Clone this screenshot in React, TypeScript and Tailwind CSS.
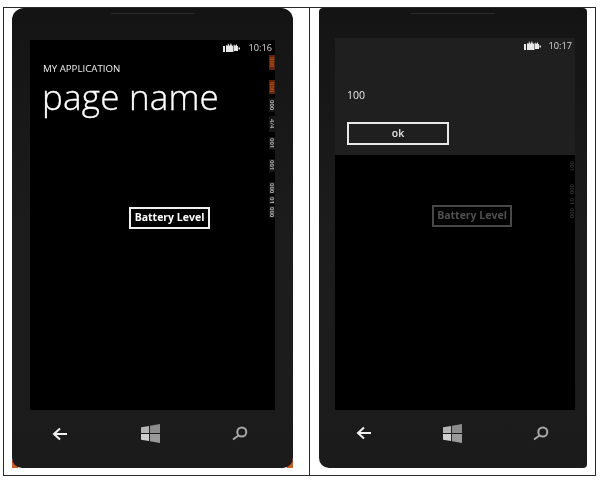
import React from "react";

const font = { fontFamily: '"Open Sans", "Noto Sans", sans-serif' };

function Status({ time, gap }: { time: string; gap: string }) {
  return (
    <div className={`flex items-center justify-end h-[15px] pr-[3px] ${gap}`}>
      <svg width="17" height="9" viewBox="0 0 17 9" className="text-[#e8e8e8]">
        <path fill="currentColor" d="M0 3h2v6H0zM3 2l1.500 1L5 0l1.500 3L8 0l1 3 1.500-1v7H3zM11 1l1 2 2-2v2h1v5h-4z" />
        <rect x="15.500" y="4.500" width="1.500" height="2" fill="currentColor" />
      </svg>
      <span className="text-[9.200px] leading-none text-[#dcdcdc]">{time}</span>
    </div>
  );
}

type Item = { gap: number; h: number; t: string; hot?: boolean };

const live: Item[] = [
  { gap: 0, h: 15, t: "000", hot: true },
  { gap: 10, h: 14, t: "000", hot: true },
  { gap: 4, h: 14, t: "000" },
  { gap: 4, h: 16, t: "4/4" },
  { gap: 5, h: 13, t: "001" },
  { gap: 9, h: 13, t: "001" },
  { gap: 10, h: 12, t: "000" },
  { gap: 2, h: 8, t: "01" },
  { gap: 2, h: 12, t: "000" },
];

const dimmed: Item[] = [
  { gap: 0, h: 12, t: "001" },
  { gap: 11, h: 12, t: "000" },
  { gap: 2, h: 8, t: "01" },
  { gap: 2, h: 12, t: "000" },
];

function Counters({ dim }: { dim?: boolean }) {
  const items = dim ? dimmed : live;
  return (
    <div className={`absolute right-0 w-[6px] flex flex-col ${dim ? "top-[122px]" : "top-[15px]"}`}>
      {items.map((it, i) => (
        <div
          key={i}
          style={{ marginTop: it.gap, height: it.h }}
          className={`w-[6px] flex items-center justify-center [writing-mode:vertical-rl] text-[6px] leading-[6px] font-bold ${
            dim ? "text-[#2e2e2e]" : it.hot ? "bg-[#5c2410] text-[#b0521f]" : "bg-[#161616] text-[#a8a8a8]"
          }`}
        >
          {it.t}
        </div>
      ))}
    </div>
  );
}

function Nav({ className }: { className: string }) {
  return (
    <div className={`flex items-center justify-between h-[46px] ${className}`}>
      <svg width="16" height="14" viewBox="0 0 16 14" fill="none" stroke="#f0f0f0" strokeWidth="2">
        <path d="M15 7H2M8 1.500 2 7l6 5.500" />
      </svg>
      <svg width="19" height="19" viewBox="0 0 20 20">
        <path fill="#b4b4b4" d="M0 3.500 8.500 2v7.500H0z" />
        <path fill="#8c8c8c" d="M9.500 1.800 20 0v9.500H9.500z" />
        <path fill="#d0d0d0" d="M0 10.500h8.500V18L0 16.500z" />
        <path fill="#9a9a9a" d="M9.500 10.500H20V20L9.500 18.200z" />
      </svg>
      <svg width="16" height="15" viewBox="0 0 16 15" fill="none" stroke="#a8a8a8" strokeWidth="2">
        <circle cx="9.800" cy="6" r="4.500" />
        <path d="M6.500 9.500 1 13.500" />
      </svg>
    </div>
  );
}

function Phone({ width, side, radius, children, corners }: { width: string; side: string; radius: string; children: React.ReactNode; corners?: boolean }) {
  return (
    <div className={`relative ${width} h-[460px]`}>
      {corners && (
        <>
          <div className="absolute left-0 bottom-0 w-[6px] h-[8px] bg-[#c8602a]" />
          <div className="absolute right-0 bottom-0 w-[6px] h-[8px] bg-[#c8602a]" />
        </>
      )}
      <div className={`relative h-full bg-gradient-to-b from-[#141414] via-[#1c1c1c] to-[#1b1b1b] flex flex-col ${radius} ${side}`}>
        <div className="absolute top-[5px] left-1/2 -translate-x-1/2 w-[84px] h-[1px] bg-[#2a2a2a]" />
        {children}
      </div>
    </div>
  );
}

export default function App() {
  return (
    <div className="w-[600px] h-[484px] bg-white overflow-hidden pt-[7px] pl-[3px] blur-[0.5px]" style={font}>
      <div className="flex w-[593px] h-[469px] border border-[#2a2a2a]">
        <div className="w-[306px] h-full pl-[8px] border-r border-[#2a2a2a]">
          <Phone width="w-[281px]" radius="rounded-t-[12px] rounded-b-[10px]" side="pl-[18px] pr-[18px] pt-[32px]" corners>
            <div className="relative h-[370px] bg-black flex flex-col text-white">
              <Status time="10:16" gap="gap-[9px]" />
              <Counters />
              <div className="pl-[13px] pt-[7px]">
                <div className="text-[9.700px] leading-[14px] text-[#f0f0f0]">MY APPLICATION</div>
                <div className="text-[35px] leading-[42px] font-light tracking-[0.2px] -ml-[1px] [-webkit-text-stroke:0.3px_white]">page name</div>
              </div>
              <div className="pl-[99px] pt-[89px]">
                <div className="w-[81px] h-[22px] border-2 border-[#f0f0f0] flex items-center justify-center text-[10.500px] font-bold text-white">
                  Battery Level
                </div>
              </div>
            </div>
            <Nav className="pl-[22px] pr-[27px] pt-[1px]" />
          </Phone>
        </div>
        <div className="flex-1 h-full pl-[9px]">
          <Phone width="w-[268px]" radius="rounded-t-[4px] rounded-bl-[10px] rounded-br-[4px]" side="pl-[16px] pr-[12px] pt-[30px]">
            <div className="relative h-[372px] bg-black flex flex-col">
              <div className="h-[117px] bg-[#1f1f1f] flex flex-col">
                <Status time="10:17" gap="gap-[8px]" />
                <div className="pl-[12px] pt-[35px] text-[10.500px] leading-[14px] text-[#e8e8e8]">100</div>
                <div className="pl-[12px] pt-[20px]">
                  <div className="w-[102px] h-[23px] border-2 border-[#e8e8e8] flex items-center justify-center text-[10.500px] font-semibold text-[#e8e8e8]">
                    ok
                  </div>
                </div>
              </div>
              <Counters dim />
              <div className="pl-[97px] pt-[50px]">
                <div className="w-[80px] h-[22px] border-2 border-[#484848] flex items-center justify-center text-[10.500px] font-bold text-[#505050]">
                  Battery Level
                </div>
              </div>
            </div>
            <Nav className="pl-[21px] pr-[26px]" />
          </Phone>
        </div>
      </div>
    </div>
  );
}
